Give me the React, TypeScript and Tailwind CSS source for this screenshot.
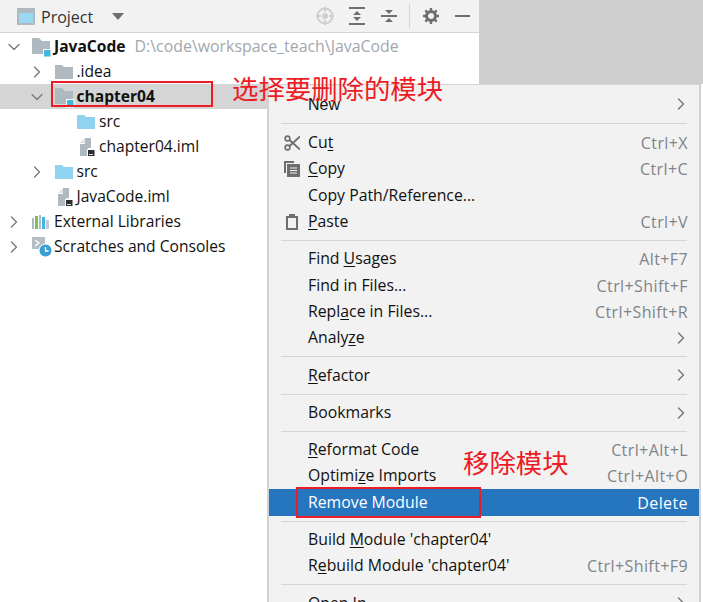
import React from 'react';
import { ChevronRight, ChevronDown } from 'lucide-react';

const uiFont = "font-['Open_Sans','Noto_Sans',sans-serif]";

const FolderIcon = ({ color = '#afb9c0', badge = false }: { color?: string; badge?: boolean }) => (
  <svg width="18" height="18" viewBox="0 0 18 18" className="shrink-0 overflow-visible">
    <path d={badge ? 'M0 0h7l3 3h8v13H0z' : 'M0 2h7l2 2h9v12H0z'} fill={color} />
    {badge && <rect x="11.5" y="11.5" width="7.5" height="7.5" fill="#40b6e0" stroke="#fff" strokeWidth="1" />}
  </svg>
);

const ImlIcon = () => (
  <svg width="18" height="20" viewBox="0 0 18 20" className="shrink-0">
    <path d="M3 7h5V1h6v10h-3v8H3z" fill="#afb9c0" />
    <path d="M8 1v5H3z" fill="#dfe3e6" />
    <rect x="10.5" y="12.5" width="7.5" height="7" fill="#2e2e2e" stroke="#fff" strokeWidth="1" />
    <rect x="12" y="17" width="4" height="1" fill="#ddd" />
  </svg>
);

const LibIcon = () => (
  <svg width="18" height="14" viewBox="0 0 18 14" className="shrink-0">
    <rect x="0" y="3" width="2" height="11" fill="#afb9c0" />
    <rect x="3" y="1" width="3" height="13" fill="#7cbf5f" />
    <rect x="7" y="0" width="2" height="14" fill="#afb9c0" />
    <rect x="10" y="2" width="3" height="12" fill="#40b6e0" />
    <rect x="14" y="5" width="3" height="9" fill="#c3ccd2" />
  </svg>
);

const ScratchIcon = () => (
  <svg width="20" height="20" viewBox="0 0 20 20" className="shrink-0 mr-[-2px]">
    <path d="M0 0h13v12H0z" fill="#b4bec5" />
    <path d="M3 3l4 3-4 3" fill="none" stroke="#fff" strokeWidth="1.3" />
    <circle cx="13.5" cy="13.5" r="6.5" fill="#389fd6" stroke="#fff" strokeWidth="1" />
    <path d="M13.5 10v4h3" fill="none" stroke="#fff" strokeWidth="1.3" />
  </svg>
);

const Tree = ({ indent, open, selected, bold, icon, label, hint }: {
  indent: number;
  open?: boolean;
  selected?: boolean;
  bold?: boolean;
  icon: React.ReactNode;
  label: string;
  hint?: string;
}) => (
  <div className={`flex items-center h-[25px] whitespace-nowrap ${selected ? 'bg-[#d5d5d5]' : ''}`} style={{ paddingLeft: indent }}>
    <span className="w-[25px] shrink-0 flex ml-[-3px] mr-[3px]">
      {open === true && <ChevronDown size={20} strokeWidth={1.6} className="text-[#7a7a7a]" />}
      {open === false && <ChevronRight size={20} strokeWidth={1.6} className="text-[#7a7a7a]" />}
    </span>
    {icon}
    <span className={`text-[15.6px] ml-[4px] text-[#111] ${bold ? 'font-bold' : ''}`}>{label}</span>
    {hint && <span className="text-[15.9px] ml-[9px] text-[#a2a7ad]">{hint}</span>}
  </div>
);

const U = ({ children }: { children: React.ReactNode }) => <span className="underline underline-offset-2">{children}</span>;

const Row = ({ children, keys, arrow, icon, active, arial }: {
  children: React.ReactNode;
  keys?: string;
  arrow?: boolean;
  icon?: React.ReactNode;
  active?: boolean;
  arial?: boolean;
}) => (
  <div className={`flex items-center h-[26.3px] pl-[15px] pr-[11px] ${active ? 'bg-[#2675bf] text-white' : 'text-[#111]'}`}>
    <span className="w-[24px] shrink-0 flex">{icon}</span>
    <span className={`whitespace-pre ${arial ? "font-['Liberation_Sans',sans-serif] text-[16px] pt-[2px]" : ''}`}>{children}</span>
    <span className="flex-1" />
    {keys && <span className={`text-[16px] tracking-[0.4px] ${active ? 'text-white' : 'text-[#7f848a]'}`}>{keys}</span>}
    {arrow && <ChevronRight size={20} strokeWidth={1.7} className="text-[#777777] mr-[-3px]" />}
  </div>
);

const Sep = ({ first }: { first?: boolean }) => (
  <div className={`${first ? 'h-[13px]' : 'h-[11px]'} flex items-center pl-[12px] pr-[12px]`}>
    <div className="h-px w-full bg-[#d6d6d6]" />
  </div>
);

const App: React.FC = () => {
  return (
    <div className={`relative w-[703px] h-[602px] overflow-hidden bg-white ${uiFont}`}>
      <div className="flex items-start">
        {/* Project panel */}
        <div className="w-[479px]">
          <div className="flex items-center h-[33px] pl-[17px] pr-[9px] bg-[#f2f2f2] border-b border-[#d4d4d4]">
            <svg width="18" height="17" viewBox="0 0 18 17" className="shrink-0">
              <rect x="0" y="0" width="18" height="17" fill="#afb9c0" />
              <rect x="2" y="5" width="14" height="10" fill="#9bd8f2" />
            </svg>
            <span className="ml-[6px] mt-[1px] text-[16px] text-[#333]">Project</span>
            <svg width="12" height="7" viewBox="0 0 12 7" className="ml-[19px]"><path d="M0 0h12L6 7z" fill="#6e6e6e" /></svg>
            <span className="flex-1" />
            <svg width="18" height="18" viewBox="0 0 18 18" className="mr-[15px]">
              <circle cx="9" cy="9" r="7.5" fill="none" stroke="#cfcfcf" strokeWidth="2" />
              <circle cx="9" cy="9" r="3" fill="#cfcfcf" />
              <path d="M9 0v5M9 13v5M0 9h5M13 9h5" stroke="#cfcfcf" strokeWidth="2" />
            </svg>
            <svg width="16" height="18" viewBox="0 0 16 18" className="mr-[16px]">
              <path d="M0 1h16M0 17h16" stroke="#6e6e6e" strokeWidth="2" />
              <path d="M8 4l4 4H4zM8 14l4-4H4z" fill="#6e6e6e" />
            </svg>
            <svg width="16" height="18" viewBox="0 0 16 18" className="mr-[12px]">
              <path d="M0 9h16" stroke="#6e6e6e" strokeWidth="2" />
              <path d="M8 7L4 3h8zM8 11l4 4H4z" fill="#6e6e6e" />
            </svg>
            <div className="w-px h-[24px] bg-[#d4d4d4] mr-[13px]" />
            <svg width="16" height="16" viewBox="0 0 16 16" className="mr-[16px]">
              <circle cx="8" cy="8" r="4.5" fill="none" stroke="#6e6e6e" strokeWidth="3" />
              <path d="M8 0v3M8 13v3M0 8h3M13 8h3M2.3 2.3l2 2M11.7 11.7l2 2M2.3 13.7l2-2M11.7 4.3l2-2" stroke="#6e6e6e" strokeWidth="2.4" />
            </svg>
            <div className="w-[15px] h-[2px] bg-[#6e6e6e]" />
          </div>
          <div className="pt-[1px]">
            <Tree indent={7} open bold icon={<FolderIcon badge />} label="JavaCode" hint="D:\code\workspace_teach\JavaCode" />
            <Tree indent={29.5} open={false} icon={<FolderIcon />} label=".idea" />
            <Tree indent={29.5} open selected bold icon={<FolderIcon badge />} label="chapter04" />
            <Tree indent={52} icon={<FolderIcon color="#8fd3f0" />} label="src" />
            <Tree indent={52} icon={<ImlIcon />} label="chapter04.iml" />
            <Tree indent={29.5} open={false} icon={<FolderIcon color="#8fd3f0" />} label="src" />
            <Tree indent={29.5} icon={<ImlIcon />} label="JavaCode.iml" />
            <Tree indent={7} open={false} icon={<LibIcon />} label="External Libraries" />
            <Tree indent={7} open={false} icon={<ScratchIcon />} label="Scratches and Consoles" />
          </div>
        </div>
        <div className="flex-1 h-[84px] bg-[#cfcfcf]" />
      </div>

      {/* Context menu */}
      <div className="absolute left-[267px] top-[84px] w-[434px] h-[530px] bg-[#f2f2f2] border-l-2 border-r-2 border-t border-[#d2d2d2] text-[15.8px] pt-[5.6px]">
        <Row arrow arial>New</Row>
        <Sep first />
        <Row keys="Ctrl+X" icon={
          <svg width="16" height="16" viewBox="0 0 16 16">
            <circle cx="3.5" cy="3.5" r="2.4" fill="none" stroke="#6e6e6e" strokeWidth="1.6" />
            <circle cx="3.5" cy="12.5" r="2.4" fill="none" stroke="#6e6e6e" strokeWidth="1.6" />
            <path d="M5.5 5L16 14.5M5.5 11L16 1.5" stroke="#6e6e6e" strokeWidth="1.8" />
          </svg>
        }>Cu<U>t</U></Row>
        <Row keys="Ctrl+C" icon={
          <svg width="16" height="16" viewBox="0 0 16 16">
            <path d="M0 0h10v2H2v10H0z" fill="#6e6e6e" />
            <rect x="3" y="3" width="13" height="13" fill="#6e6e6e" />
            <path d="M6 7h7M6 9.5h7M6 12h7" stroke="#f2f2f2" strokeWidth="1" />
          </svg>
        }><U>C</U>opy</Row>
        <Row>Copy Path/Reference...</Row>
        <Row keys="Ctrl+V" icon={
          <svg width="16" height="16" viewBox="0 0 16 16">
            <path d="M3 3h10v12H3z" fill="none" stroke="#6e6e6e" strokeWidth="2" />
            <rect x="5" y="0" width="6" height="4" fill="#6e6e6e" />
          </svg>
        }><U>P</U>aste</Row>
        <Sep />
        <Row keys="Alt+F7">Find <U>U</U>sages</Row>
        <Row keys="Ctrl+Shift+F">Find in Files...</Row>
        <Row keys="Ctrl+Shift+R">Repl<U>a</U>ce in Files...</Row>
        <Row arrow>Analy<U>z</U>e</Row>
        <Sep />
        <Row arrow><U>R</U>efactor</Row>
        <Sep />
        <Row arrow>Bookmarks</Row>
        <Sep />
        <Row keys="Ctrl+Alt+L"><U>R</U>eformat Code</Row>
        <Row keys="Ctrl+Alt+O">Optimi<U>z</U>e Imports</Row>
        <Row keys="Delete" active>Remove Module</Row>
        <Sep />
        <Row>Build <U>M</U>odule 'chapter04'</Row>
        <Row keys="Ctrl+Shift+F9">R<U>e</U>build Module 'chapter04'</Row>
        <Sep />
        <Row arrow>Open In</Row>
      </div>

      {/* Annotations */}
      <div className="absolute left-[51px] top-[81px] w-[162px] h-[26px] border-2 border-[#ed1c24]" />
      <div className="absolute left-[296px] top-[487px] w-[185px] h-[31px] border-2 border-[#ed1c24]" />
      <div className="absolute left-[232px] top-[71px] text-[26.4px] leading-[34px] text-[#ed1c24] font-['Noto_Sans_CJK_SC',sans-serif]">选择要删除的模块</div>
      <div className="absolute left-[463px] top-[445px] text-[26.4px] leading-[34px] text-[#ed1c24] font-['Noto_Sans_CJK_SC',sans-serif]">移除模块</div>
    </div>
  );
};

export default App;
